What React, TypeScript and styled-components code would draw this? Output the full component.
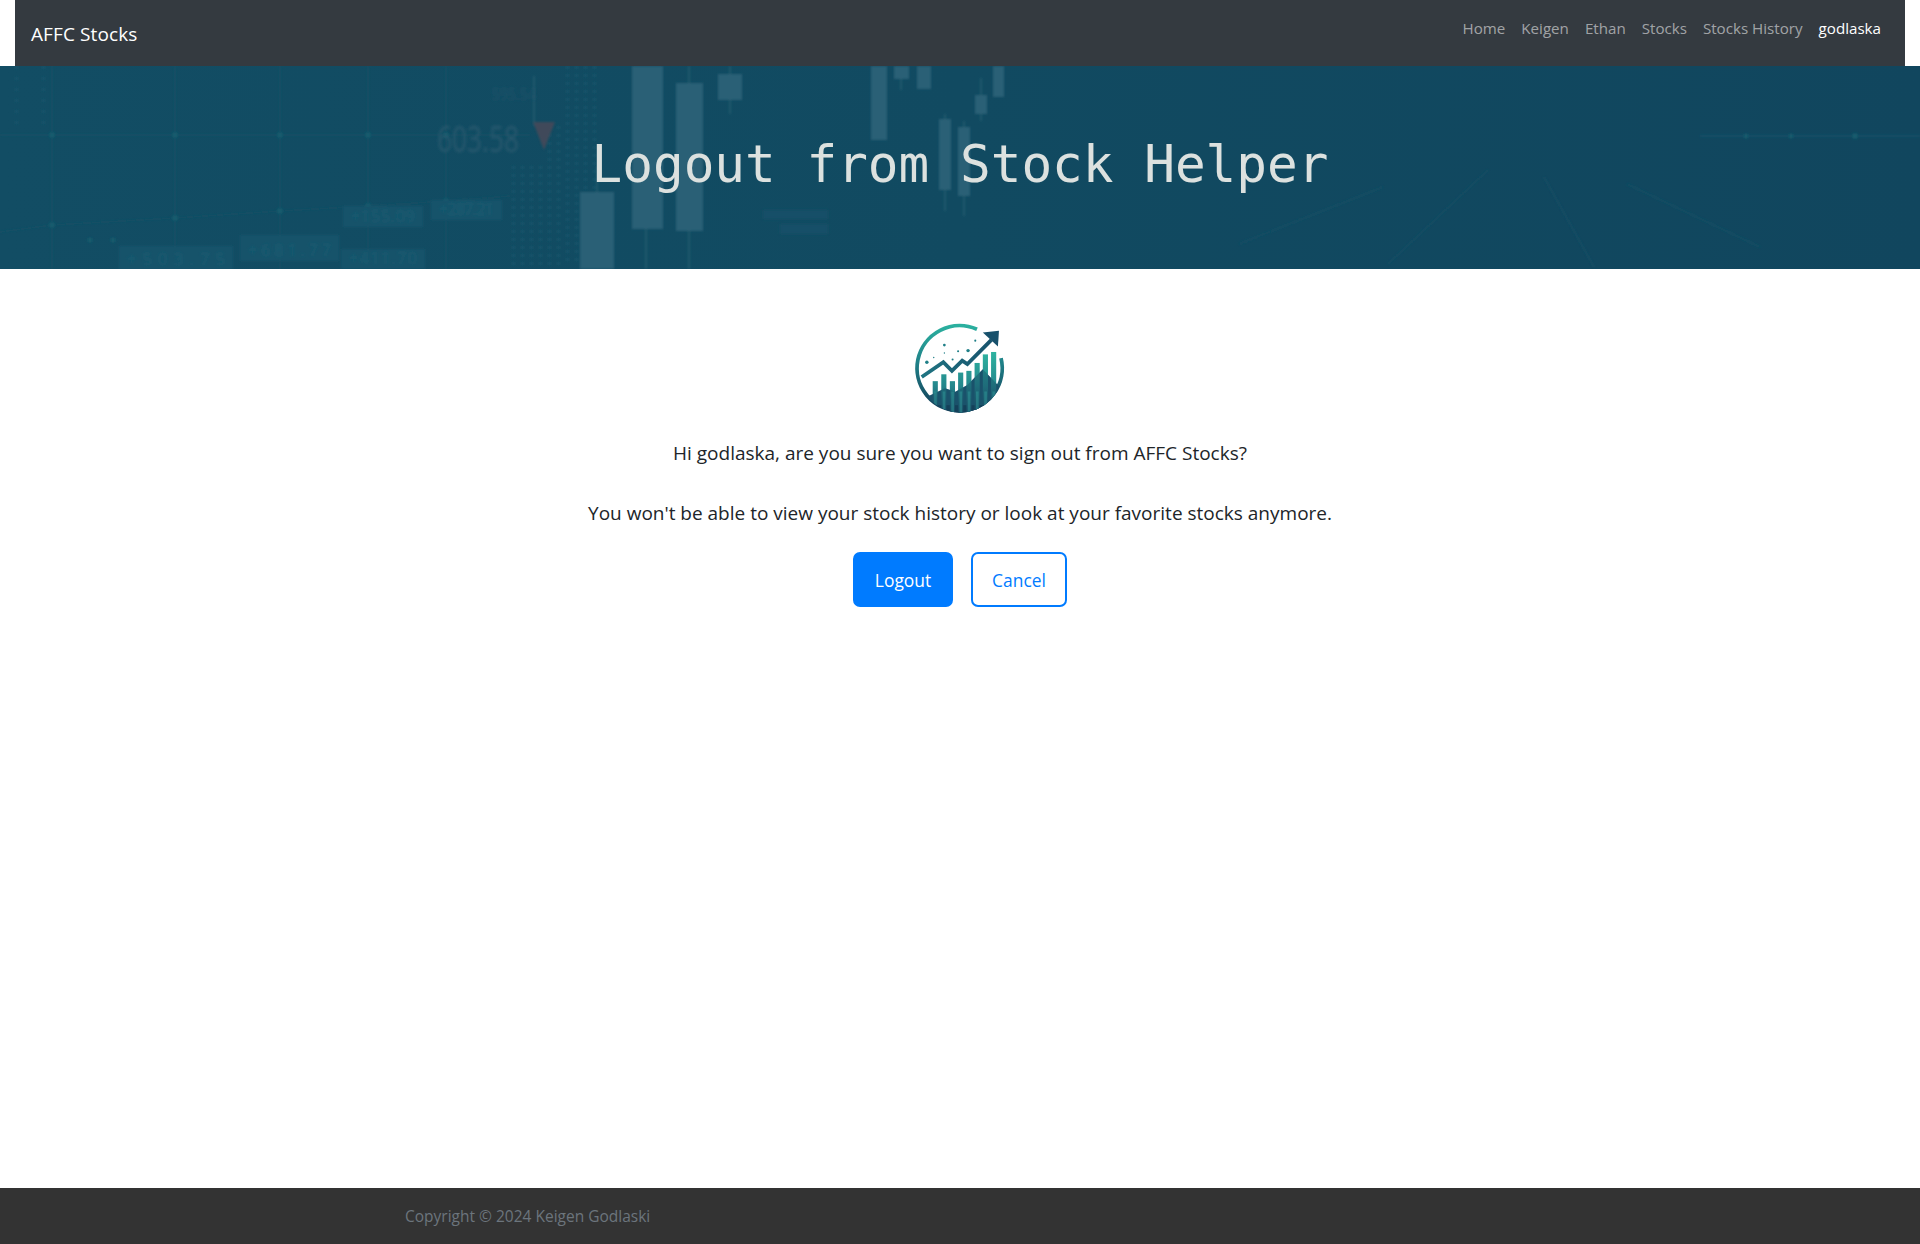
import React from 'react';
import styled, { createGlobalStyle } from 'styled-components';

const Global = createGlobalStyle`
  html, body { margin: 0; padding: 0; background: #fff; }
  body { font-family: "Open Sans", "Noto Sans", sans-serif; color: #212529; }
`;
const Page = styled.div`
  min-height: 1244px; display: flex; flex-direction: column;
`;
const Navbar = styled.nav`
  margin: 0 15px; height: 66px; background: #343a40; display: flex;
  justify-content: space-between; padding: 0 24px 0 16px; box-sizing: border-box;
`;
const Brand = styled.a`
  color: #fff; font-size: 19px; line-height: 68px; letter-spacing: 0.1px;
`;
const NavList = styled.div`
  display: flex; gap: 16px; padding-top: 17px;
`;
const NavLink = styled.a<{ $active?: boolean }>`
  color: ${p => (p.$active ? '#fff' : 'rgba(255,255,255,0.55)')};
  font-size: 15.15px; line-height: 22px;
`;
const Hero = styled.header`
  position: relative; height: 203px; background: linear-gradient(90deg, #124d64 0%, #114a61 50%, #11465e 100%);
  overflow: hidden; display: flex; align-items: center; justify-content: center;
`;
const HeroArt = styled.svg`
  position: absolute; inset: 0; width: 100%; height: 100%;
`;
const HeroTitle = styled.h1`
  position: relative; margin: 0; color: #dce1df; font-weight: 400;
  font-family: "DejaVu Sans Mono", monospace; font-size: 51px; line-height: 60px;
  top: -3px;
`;
const Main = styled.main`
  flex: 1; display: flex; flex-direction: column; align-items: center; padding-top: 52px;
`;
const Logo = styled.svg`
  width: 103px; height: 98px; display: block; margin-bottom: 22px;
`;
const Message = styled.p`
  margin: 0 0 36px; font-size: 19px; line-height: 24px; text-align: center;
  &:last-of-type { margin-bottom: 27px; }
`;
const Actions = styled.div`
  display: flex; gap: 18px;
`;
const Button = styled.button<{ $outline?: boolean }>`
  height: 55px; width: ${p => (p.$outline ? '96px' : '100px')}; padding: 0; border-radius: 7px;
  font: inherit; font-size: 17.4px;
  border: 2px solid #007bff; background: ${p => (p.$outline ? '#fff' : '#007bff')};
  color: ${p => (p.$outline ? '#007bff' : '#fff')};
`;
const Footer = styled.footer`
  height: 56px; background: #333; display: flex; align-items: center; padding-left: 405px;
  font-size: 15.5px; color: #6c757d;
`;

const candles: [number, number, number, number][] = [
  [580, 126, 34, 77], [632, 0, 31, 163], [676, 17, 27, 148], [718, 8, 24, 26],
  [871, 0, 16, 74], [894, 0, 15, 13], [917, 0, 14, 23], [975, 29, 12, 19],
  [993, 0, 11, 31], [939, 53, 12, 71], [958, 61, 12, 69],
];
const wicks: [number, number, number][] = [
  [646, 0, 203], [689, 0, 203], [730, 0, 48], [901, 0, 24], [981, 12, 55], [945, 48, 145], [964, 55, 150],
  [597, 100, 126], [534, 10, 60],
];
const gridX = [52, 175, 280, 368, 446];
const lowerLine: [number, number][] = [[52, 159], [175, 152], [280, 145], [368, 140], [446, 135]];
const labels: [number, number, number, number, string][] = [
  [119, 180, 114, 24, '+503.75'], [240, 169, 99, 26, '+681.77'], [343, 140, 80, 21, '+155.09'],
  [431, 134, 71, 20, '+287.21'], [341, 183, 84, 20, '+411.70'],
];
const dotField = (() => {
  const out: [number, number][] = [];
  for (let x = 512; x < 600; x += 9) {
    const start = x < 545 ? 100 : x < 565 ? 60 : 0;
    for (let y = start; y < 200; y += 8) out.push([x, y]);
  }
  [15, 42].forEach(x => { for (let y = 0; y < 56; y += 11) out.push([x, y]); });
  return out;
})();
const bars: [number, number][] = [
  [69, 175], [94, 155], [119, 175], [143, 150], [167, 145], [191, 122], [215, 97], [239, 90],
];
const speckles: [number, number, number][] = [
  [52, 120, 5], [103, 70, 4], [72, 106, 2], [103, 93, 2], [143, 88, 3], [172, 86, 5], [127, 112, 3], [193, 57, 3],
];

const App: React.FC = () => (
  <Page>
    <Global />
    <Navbar>
      <Brand>AFFC Stocks</Brand>
      <NavList>
        <NavLink>Home</NavLink><NavLink>Keigen</NavLink><NavLink>Ethan</NavLink>
        <NavLink>Stocks</NavLink><NavLink>Stocks History</NavLink><NavLink $active>godlaska</NavLink>
      </NavList>
    </Navbar>
    <Hero>
      <HeroArt viewBox="0 0 1920 203" preserveAspectRatio="none">
        <defs>
          <filter id="soft"><feGaussianBlur stdDeviation="1" /></filter>
          <filter id="softer"><feGaussianBlur stdDeviation="1.6" /></filter>
        </defs>
        <g filter="url(#soft)">
          <g stroke="#165267" strokeWidth="1" fill="none">
            {gridX.map(x => <path key={x} d={`M${x} 0V203`} />)}
            <path d="M0 69H530" />
            <path d={`M0 166L${lowerLine.map(p => p.join(' ')).join('L')}L510 130`} />
            <path d="M1388 198L1488 104M1594 201L1544 111M1760 181L1627 118M1239 178L1383 121" stroke="#144f65" strokeWidth="1.5" />
            <path d="M1700 70H1920" stroke="#155670" />
          </g>
          <g fill="#175b6d">
            {gridX.map(x => <circle key={x} cx={x} cy={69} r={3} />)}
            {lowerLine.map(([x, y]) => <circle key={x} cx={x} cy={y} r={3} />)}
            <circle cx={1746} cy={70} r={2.5} /><circle cx={1791} cy={70} r={2.5} /><circle cx={1855} cy={70} r={3} />
            <circle cx={90} cy={174} r={2.5} /><circle cx={113} cy={174} r={2.5} />
          </g>
          <g fill="#19546a">
            {dotField.map(([x, y]) => <rect key={`${x}-${y}`} x={x} y={y} width={3} height={3} />)}
          </g>
          <g fill="#13536a">
            {labels.map(([x, y, w, h]) => <rect key={x} x={x} y={y} width={w} height={h} />)}
          </g>
        </g>
        <g filter="url(#softer)">
          <rect x={763} y={144} width={65} height={9} fill="#134f67" />
          <rect x={780} y={158} width={48} height={10} fill="#134f67" />
        </g>
        <g fill="#195d73" fontFamily="Open Sans, sans-serif" fontSize="16" filter="url(#softer)">
          {labels.map(([x, y, w, h, t]) => <text key={x} x={x + 8} y={y + h - 5} textLength={w - 16}>{t}</text>)}
        </g>
        <g filter="url(#soft)">
          <g stroke="#245c71" strokeWidth="1.5">
            {wicks.map(([x, a, b]) => <path key={x} d={`M${x} ${a}V${b}`} />)}
          </g>
          <g fill="#2a6176">
            {candles.map(([x, y, w, h]) => <rect key={x} x={x} y={y} width={w} height={h} />)}
          </g>
          <path d="M533 56H555L544 84Z" fill="#3f4a5a" />
        </g>
        <g filter="url(#softer)" fontFamily="Open Sans, sans-serif" fill="#28596e">
          <text x={437} y={86} fontSize="36" textLength={82} lengthAdjust="spacingAndGlyphs">603.58</text>
          <text x={492} y={34} fontSize="16" textLength={44} lengthAdjust="spacingAndGlyphs" fill="#1f536a">595.54</text>
        </g>
      </HeroArt>
      <HeroTitle>Logout from Stock Helper</HeroTitle>
    </Hero>
    <Main>
      <Logo viewBox="0 0 300 285">
        <defs>
          <linearGradient id="ring" x1="0" y1="0" x2="0" y2="1">
            <stop offset="0" stopColor="#2bb09f" />
            <stop offset="0.45" stopColor="#1f7f87" />
            <stop offset="1" stopColor="#133c56" />
          </linearGradient>
          <linearGradient id="bar" gradientUnits="userSpaceOnUse" x1="0" y1="90" x2="0" y2="265">
            <stop offset="0" stopColor="#2eb3a0" />
            <stop offset="0.55" stopColor="#24888d" />
            <stop offset="1" stopColor="#1a4f68" />
          </linearGradient>
          <linearGradient id="arrow" gradientUnits="userSpaceOnUse" x1="37" y1="0" x2="260" y2="0">
            <stop offset="0" stopColor="#1f7482" />
            <stop offset="1" stopColor="#17506b" />
          </linearGradient>
          <clipPath id="disc"><circle cx="150" cy="142" r="124" /></clipPath>
        </defs>
        <path d="M198 24A124 124 0 1 0 268 108" fill="none" stroke="url(#ring)" strokeWidth="11" />
        <g clipPath="url(#disc)">
          <path d="M50 222L105 196L135 206L170 186L215 140L262 190V285H50Z" fill="#1d5a74" />
          <rect x="40" y="245" width="220" height="40" fill="#133c56" />
          {bars.map(([x, y]) => <rect key={x} x={x} y={y} width={15} height={280 - y} fill="url(#bar)" />)}
          <path d="M50 222L105 196L135 206L170 186L215 140L262 190V285H50Z" fill="#164660" opacity="0.4" />
          {bars.map(([x]) => <rect key={x} x={x + 4} y={205} width={8} height={75} fill="#2f9a9a" opacity="0.5" />)}
        </g>
        <polyline points="37,163 100,120 125,145 155,115 170,125 240,55" fill="none" stroke="#fff" strokeWidth="20" />
        <polyline points="37,163 100,120 125,145 155,115 170,125 240,55" fill="none" stroke="url(#arrow)" strokeWidth="11" />
        <path d="M215 33L262 28L259 74Z" fill="#17506b" />
        {speckles.map(([cx, cy, r]) => <circle key={cx} cx={cx} cy={cy} r={r} fill="#1f7f87" />)}
      </Logo>
      <Message>Hi godlaska, are you sure you want to sign out from AFFC Stocks?</Message>
      <Message>You won't be able to view your stock history or look at your favorite stocks anymore.</Message>
      <Actions>
        <Button>Logout</Button>
        <Button $outline>Cancel</Button>
      </Actions>
    </Main>
    <Footer>Copyright © 2024 Keigen Godlaski</Footer>
  </Page>
);
export default App;
